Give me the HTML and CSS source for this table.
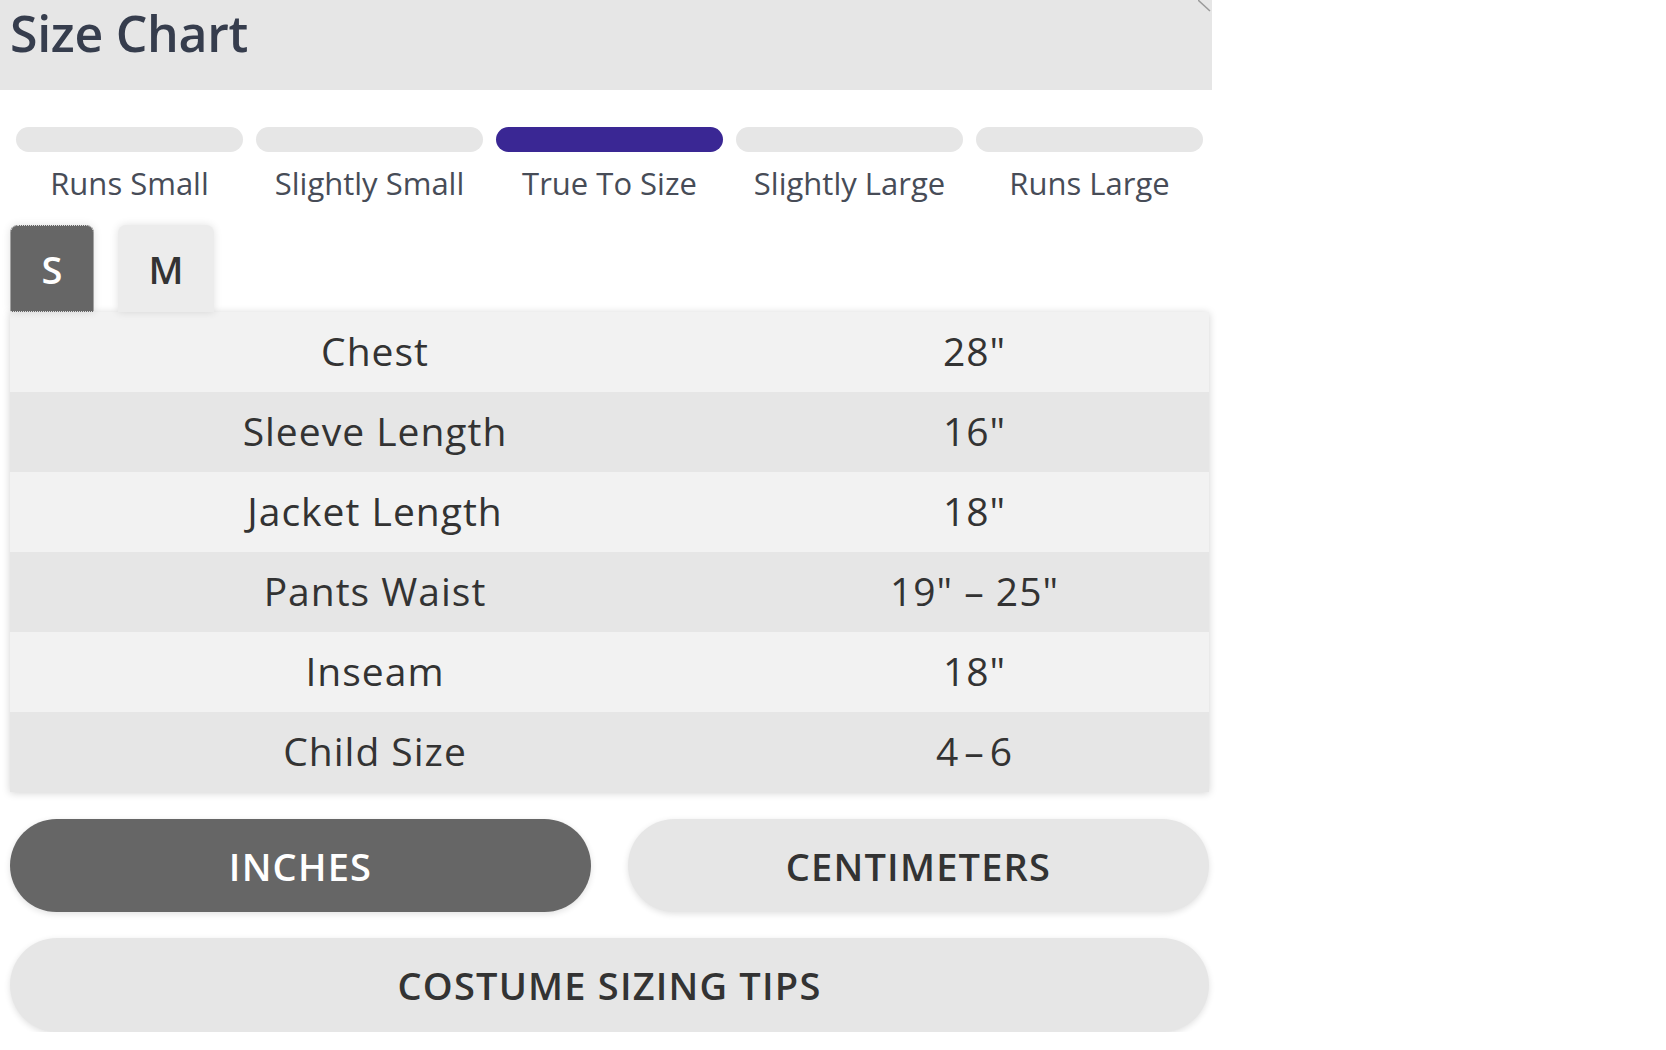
FILE: index.html
```html
<!DOCTYPE html>
<html>
<head>
<meta charset="utf-8">
<link rel="stylesheet" href="styles.css">
</head>
<body>
<div class="panel">
  <header class="head">
    <h1 class="title">Size Chart</h1>
    <svg class="close" width="14" height="12" viewBox="0 0 14 12"><line x1="0" y1="0" x2="12" y2="11" stroke="#9a9a9a" stroke-width="1.5"/></svg>
  </header>
  <section class="fit">
    <div class="fit-item"><div class="bar"></div><div class="fit-label">Runs Small</div></div>
    <div class="fit-item"><div class="bar"></div><div class="fit-label">Slightly Small</div></div>
    <div class="fit-item"><div class="bar bar-on"></div><div class="fit-label">True To Size</div></div>
    <div class="fit-item"><div class="bar"></div><div class="fit-label">Slightly Large</div></div>
    <div class="fit-item"><div class="bar"></div><div class="fit-label">Runs Large</div></div>
  </section>
  <nav class="tabs">
    <button class="tab tab-on">S</button>
    <button class="tab">M</button>
  </nav>
  <table class="chart">
    <tr><td class="k">Chest</td><td class="v">28"</td></tr>
    <tr><td class="k">Sleeve Length</td><td class="v">16"</td></tr>
    <tr><td class="k">Jacket Length</td><td class="v">18"</td></tr>
    <tr><td class="k">Pants Waist</td><td class="v">19" – 25"</td></tr>
    <tr><td class="k">Inseam</td><td class="v">18"</td></tr>
    <tr><td class="k">Child Size</td><td class="v">4<span class="dash">–</span>6</td></tr>
  </table>
  <div class="units">
    <button class="pill pill-on">INCHES</button>
    <button class="pill">CENTIMETERS</button>
  </div>
  <button class="pill pill-wide">COSTUME SIZING TIPS</button>
</div>
</body>
</html>
```

FILE: styles.css
```css
html, body {
  margin: 0;
  padding: 0;
  background: #ffffff;
}
body {
  font-family: "Open Sans", "Lato", sans-serif;
  color: #333333;
}
.panel {
  width: 1212px;
}
.head {
  position: relative;
  height: 90px;
  background: #e6e6e6;
  padding-left: 10px;
  box-sizing: border-box;
}
.title {
  margin: 0;
  font-size: 50px;
  font-weight: 600;
  line-height: 66px;
  color: #363d4d;
  letter-spacing: -0.3px;
}
.close {
  position: absolute;
  right: 0;
  top: 0;
}
.fit {
  display: grid;
  grid-template-columns: repeat(5, 1fr);
  column-gap: 13px;
  margin: 37px 9px 0 16px;
}
.fit-item {
  display: flex;
  flex-direction: column;
  align-items: center;
}
.bar {
  width: 100%;
  height: 25px;
  border-radius: 13px;
  background: #e6e6e6;
}
.bar-on {
  background: #3a2794;
}
.fit-label {
  margin-top: 11px;
  font-size: 31px;
  line-height: 40px;
  color: #474c57;
}
.tabs {
  display: flex;
  gap: 24px;
  margin: 22px 0 0 10px;
  height: 87px;
}
.tab {
  border: none;
  border-radius: 8px 8px 0 0;
  font-family: "Open Sans", sans-serif;
  font-weight: 600;
  font-size: 38px;
  padding: 0;
  width: 84px;
  background: #ececec;
  color: #333333;
  box-shadow: 0 0 8px rgba(0,0,0,0.12);
}
.tab + .tab {
  width: 96px;
}
.tab-on {
  background: #666666;
  color: #ffffff;
  outline: 1px dotted #dddddd;
  outline-offset: -1px;
}
.chart {
  margin-left: 10px;
  width: 1199px;
  border-collapse: collapse;
  box-shadow: 0 1px 8px rgba(0,0,0,0.18);
}
.chart tr {
  height: 80px;
  background: #f2f2f2;
}
.chart tr:nth-child(even) {
  background: #e6e6e6;
}
.chart td {
  padding: 0 0 3px;
  text-align: center;
  font-size: 39px;
  letter-spacing: 1px;
  color: #333333;
}
.chart .k {
  width: 730px;
}
.dash {
  padding: 0 5px;
}
.units {
  display: flex;
  gap: 37px;
  margin: 27px 3px 0 10px;
}
.pill {
  flex: 1;
  height: 93px;
  border: none;
  border-radius: 47px;
  background: #e6e6e6;
  color: #333333;
  font-family: "Open Sans", sans-serif;
  font-weight: 600;
  font-size: 38px;
  letter-spacing: 1.2px;
  box-shadow: 0 2px 6px rgba(0,0,0,0.12);
  padding: 0;
}
.pill-on {
  background: #666666;
  color: #ffffff;
}
.pill-wide {
  display: block;
  width: 1199px;
  height: 94px;
  margin: 26px 0 0 10px;
}
```
